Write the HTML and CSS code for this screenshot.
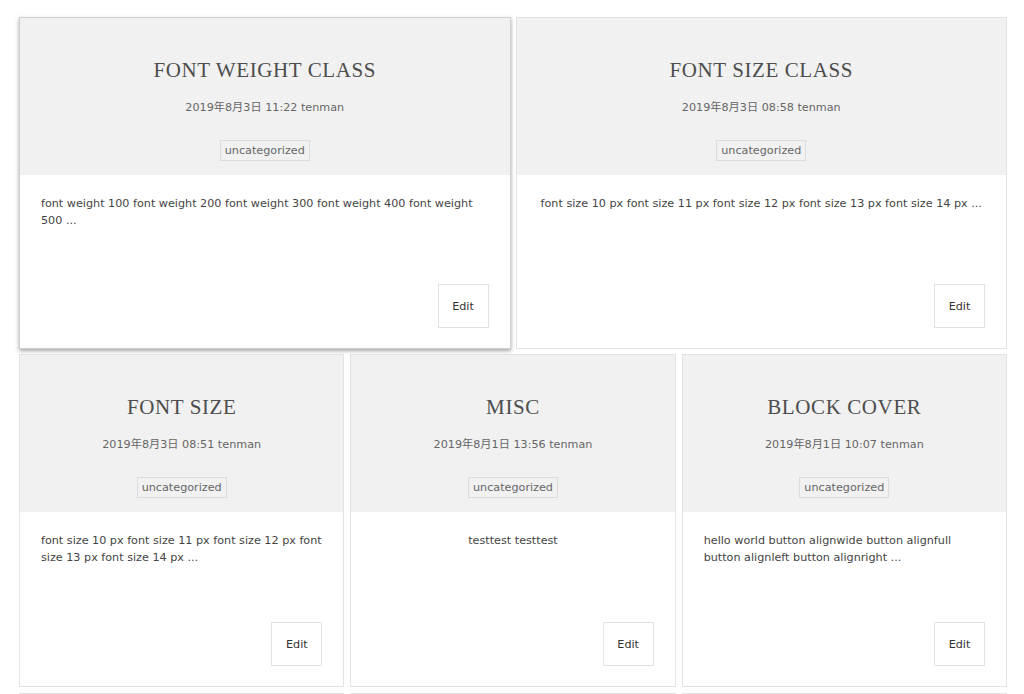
FILE: index.html
```html
<!DOCTYPE html>
<html lang="en">
<head>
    <meta charset="UTF-8">
    <title>posts</title>
    <link rel="stylesheet" href="styles.css">
</head>
<body>
<div id="main">
    <div class="row row-two">
        <div class="card card-hover">
            <div class="card-head">
                <h2 class="card-title">Font weight class</h2>
                <div class="card-date">2019年8月3日 11:22 tenman</div>
                <span class="card-tag">uncategorized</span>
            </div>
            <div class="card-body">
                <p class="card-text">font weight 100 font weight 200 font weight 300 font weight 400 font weight 500 ...</p>
                <a class="card-edit">Edit</a>
            </div>
        </div>
        <div class="card">
            <div class="card-head">
                <h2 class="card-title">Font size class</h2>
                <div class="card-date">2019年8月3日 08:58 tenman</div>
                <span class="card-tag">uncategorized</span>
            </div>
            <div class="card-body">
                <p class="card-text center">font size 10 px font size 11 px font size 12 px font size 13 px font size 14 px ...</p>
                <a class="card-edit">Edit</a>
            </div>
        </div>
    </div>
    <div class="row row-three">
        <div class="card">
            <div class="card-head">
                <h2 class="card-title">Font size</h2>
                <div class="card-date">2019年8月3日 08:51 tenman</div>
                <span class="card-tag">uncategorized</span>
            </div>
            <div class="card-body">
                <p class="card-text">font size 10 px font size 11 px font size 12 px font size 13 px font size 14 px ...</p>
                <a class="card-edit">Edit</a>
            </div>
        </div>
        <div class="card">
            <div class="card-head">
                <h2 class="card-title">Misc</h2>
                <div class="card-date">2019年8月1日 13:56 tenman</div>
                <span class="card-tag">uncategorized</span>
            </div>
            <div class="card-body">
                <p class="card-text center">testtest testtest</p>
                <a class="card-edit">Edit</a>
            </div>
        </div>
        <div class="card">
            <div class="card-head">
                <h2 class="card-title">Block cover</h2>
                <div class="card-date">2019年8月1日 10:07 tenman</div>
                <span class="card-tag">uncategorized</span>
            </div>
            <div class="card-body">
                <p class="card-text">hello world button alignwide button alignfull button alignleft button alignright ...</p>
                <a class="card-edit">Edit</a>
            </div>
        </div>
    </div>
    <!-- next row, only its top edge shows in the window -->
    <div class="row row-three">
        <div class="card"><div class="card-head"></div></div>
        <div class="card"><div class="card-head"></div></div>
        <div class="card"><div class="card-head"></div></div>
    </div>
</div>
</body>
</html>
```

FILE: styles.css
```css
body {
    margin: 0;
    background: #fff;
    font-family: "DejaVu Sans", "Noto Sans CJK JP", sans-serif;
    font-size: 11.2px;
    color: #444;
}

#main {
    width: 988px;
    margin-left: 19px;
    padding-top: 17px;
}

.row {
    display: grid;
    gap: 5px;
    margin-bottom: 5px;
}

.row-two {
    grid-template-columns: 1fr 1fr;
}

.row-three {
    grid-template-columns: 1fr 1fr 1fr;
    gap: 6px;
    margin-bottom: 6px;
}

.card {
    display: flex;
    flex-direction: column;
    height: 333px;
    box-sizing: border-box;
    border: 1px solid #e2e2e2;
    background: #fff;
}

.row-two .card {
    height: 332px;
}

.card-hover {
    border-color: #d0d0d0;
    box-shadow: 0 2px 4px rgba(0, 0, 0, 0.35);
}

.card-head {
    height: 157px;
    box-sizing: border-box;
    padding-top: 39px;
    background: #f1f1f1;
    text-align: center;
}

.card-title {
    margin: 0;
    font-family: "Liberation Serif", serif;
    font-weight: normal;
    font-size: 21px;
    line-height: 26px;
    letter-spacing: 0.6px;
    text-transform: uppercase;
    color: #4d4d4d;
}

.card-date {
    margin-top: 16px;
    line-height: 17px;
    color: #666;
}

.card-tag {
    display: inline-block;
    margin-top: 24px;
    padding: 0 4px;
    height: 19px;
    line-height: 19px;
    border: 1px solid #dcdcdc;
    color: #666;
}

.card-body {
    flex: 1;
    display: flex;
    flex-direction: column;
    padding: 20px 21px;
}

.card-text {
    margin: 0;
    line-height: 17px;
    color: #444;
}

.card-text.center {
    text-align: center;
}

.card-edit {
    margin-top: auto;
    align-self: flex-end;
    width: 51px;
    height: 44px;
    box-sizing: border-box;
    border: 1px solid #e2e2e2;
    display: flex;
    align-items: center;
    justify-content: center;
    color: #333;
}
```
